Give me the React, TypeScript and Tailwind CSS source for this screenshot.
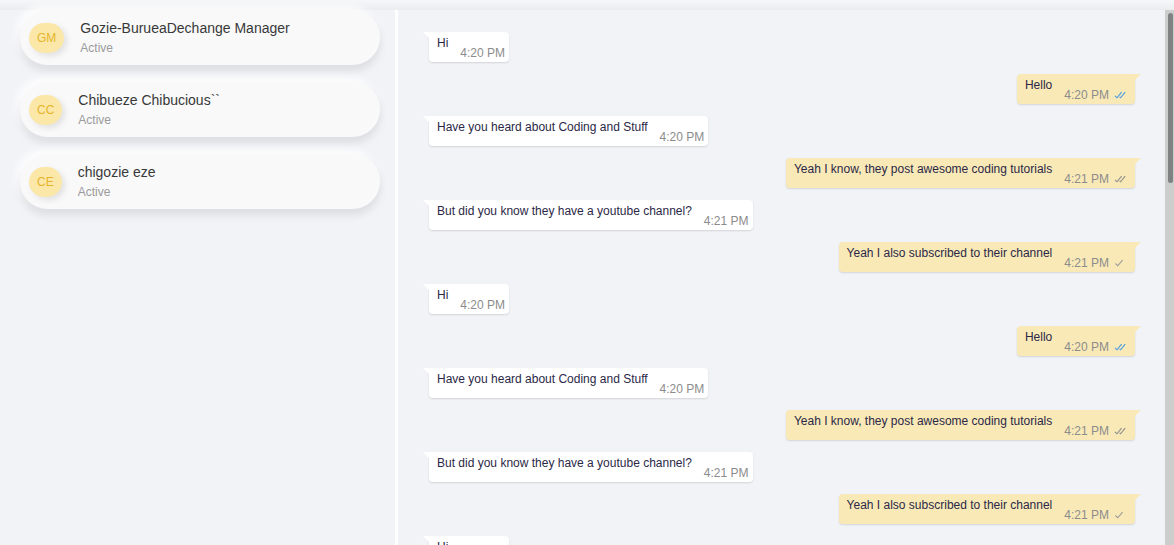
import React from "react";

type Msg = { side: "l" | "r"; text: string; time: string; tick?: "blue" | "grey2" | "grey1" };

const base: Msg[] = [
  { side: "l", text: "Hi", time: "4:20 PM" },
  { side: "r", text: "Hello", time: "4:20 PM", tick: "blue" },
  { side: "l", text: "Have you heard about Coding and Stuff", time: "4:20 PM" },
  { side: "r", text: "Yeah I know, they post awesome coding tutorials", time: "4:21 PM", tick: "grey2" },
  { side: "l", text: "But did you know they have a youtube channel?", time: "4:21 PM" },
  { side: "r", text: "Yeah I also subscribed to their channel", time: "4:21 PM", tick: "grey1" },
];
const messages: Msg[] = [...base, ...base, ...base];

const contacts = [
  { initials: "GM", name: "Gozie-BurueaDechange Manager" },
  { initials: "CC", name: "Chibueze Chibucious``" },
  { initials: "CE", name: "chigozie eze" },
];

function Tick({ kind }: { kind: "blue" | "grey2" | "grey1" }) {
  if (kind === "grey1") {
    return (
      <svg width="12" height="8" viewBox="0 0 12 8" className="ml-[5px] mb-[3px]">
        <path d="M1.5 4.5l2.3 2.3L8.5 1.2" stroke="#9a9a9a" strokeWidth="1.1" fill="none" />
      </svg>
    );
  }
  const c = kind === "blue" ? "#4a9be6" : "#8e8e8e";
  return (
    <svg width="12" height="8" viewBox="0 0 12 8" className="ml-[5px] mb-[3px]">
      <path d="M1 4.8l2 2L7.6 1.2M5.6 5.8l1 1L11.2 1.2" stroke={c} strokeWidth="1.1" fill="none" />
    </svg>
  );
}

function Bubble({ m }: { m: Msg }) {
  const left = m.side === "l";
  return (
    <div className={left ? "flex justify-start" : "flex justify-end"}>
      <div
        className={
          left
            ? "relative flex shrink-0 h-[30px] pl-2 pr-[4px] pt-[4px] bg-white rounded-[4px] rounded-tl-none shadow-[0_1px_2px_rgba(0,0,0,0.13)]"
            : "relative flex shrink-0 h-[30px] pl-2 pr-[9px] pt-[4px] bg-[#f9e9b7] rounded-[4px] rounded-tr-none shadow-[0_1px_2px_rgba(0,0,0,0.13)]"
        }
      >
        {left ? (
          <span className="absolute top-0 -left-[6px] w-0 h-0 border-t-[6px] border-t-white border-l-[6px] border-l-transparent" />
        ) : (
          <span className="absolute top-0 -right-[6px] w-0 h-0 border-t-[6px] border-t-[#f9e9b7] border-r-[6px] border-r-transparent" />
        )}
        <span className="text-[12px] leading-[14px] text-[#2b2847] whitespace-nowrap">{m.text}</span>
        <span className="self-end mb-[2px] ml-3 flex items-end">
          <span className="text-[12px] leading-[14px] text-[#8c8c8c] whitespace-nowrap">{m.time}</span>
          {m.tick && <Tick kind={m.tick} />}
        </span>
      </div>
    </div>
  );
}

export default function App() {
  return (
    <div
      className="w-full h-[545px] flex flex-col overflow-hidden bg-[#f2f3f7]"
      style={{ fontFamily: '"Liberation Sans", Arial, sans-serif' }}
    >
      <div className="h-[10px] shrink-0 bg-gradient-to-b from-[#f6f7f9] to-[#ebecf0]" />
      <div className="flex flex-1 min-h-0">
        <div className="w-[395px] shrink-0 pl-[20px] pr-[15px] flex flex-col gap-[17px]">
          {contacts.map((c) => (
            <div
              key={c.initials}
              className="h-[55px] rounded-full bg-[#f9f9fa] flex items-center pl-[9px] shadow-[0_6px_9px_rgba(0,0,0,0.09),-4px_-4px_8px_rgba(255,255,255,0.9)]"
            >
              <div className="h-[30px] px-2 rounded-full bg-[#fbe8a9] flex items-center justify-center text-[12px] text-[#e6b42a] shadow-[3px_3px_6px_rgba(0,0,0,0.1)]">
                {c.initials}
              </div>
              <div className="ml-4 flex flex-col">
                <span className="text-[14px] leading-[16px] text-[#383838]">{c.name}</span>
                <span className="mt-[5px] text-[12px] leading-[14px] text-[#9b9b9b]">Active</span>
              </div>
            </div>
          ))}
        </div>
        <div className="w-[3px] shrink-0 bg-white" />
        <div className="flex-1 min-w-0 overflow-hidden pt-[22px] pl-[31px] pr-[30px] flex flex-col gap-[12px]">
          {messages.map((m, i) => (
            <Bubble key={i} m={m} />
          ))}
        </div>
        <div className="w-[9px] shrink-0 bg-[#cdcdcd] pt-[3px] pl-[3px] pr-[1px]">
          <div className="h-[170px] rounded-[3px] bg-[#7e8282]" />
        </div>
      </div>
    </div>
  );
}
